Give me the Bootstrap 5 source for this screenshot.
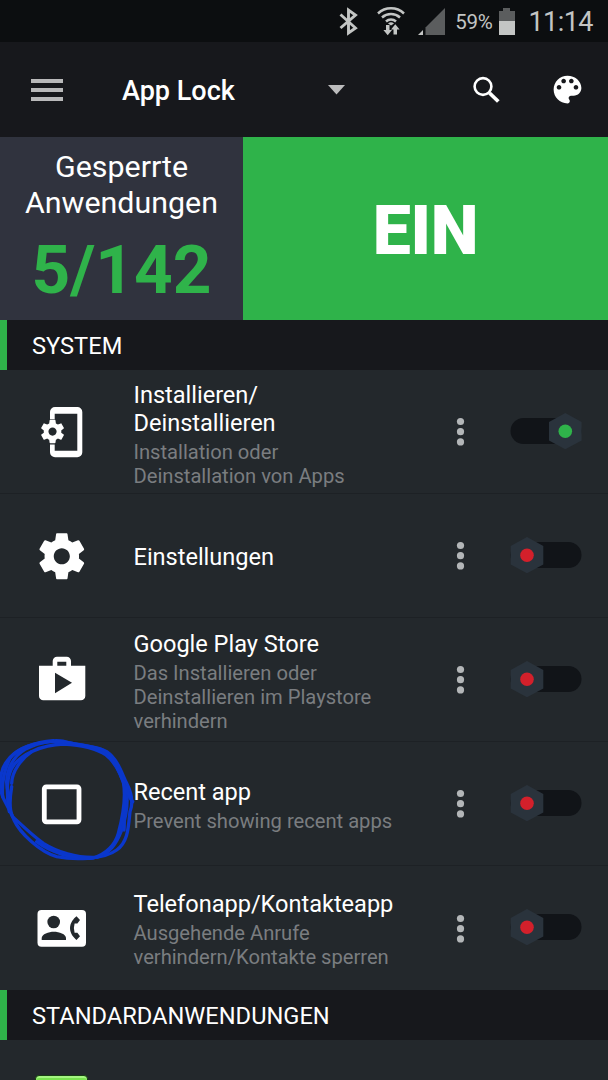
<!DOCTYPE html>
<html lang="de">
<head>
<meta charset="utf-8">
<meta name="viewport" content="width=device-width, initial-scale=1">
<title>App Lock</title>
<link href="https://cdn.jsdelivr.net/npm/bootstrap@5.3.0/dist/css/bootstrap.min.css" rel="stylesheet">
<style>
html,body{height:100%}
body{font-family:Roboto,"Liberation Sans",sans-serif;background:#23282c;color:#fff;overflow:hidden;line-height:1.172}
.screen{width:608px;height:1080px;overflow:hidden}
.screen svg{display:block;flex:none}
.status{height:42px;background:#0c0e10;color:#c3c5c4;padding-right:15px}
.pct{font-size:20.5px;letter-spacing:-.3px;padding-top:3px}
.clock{font-size:27px;letter-spacing:-.55px;padding-top:4px}
.appbar{height:95px;background:#17181c;padding:0 22px 0 31px}
.burger{width:32px;height:22px}
.burger i{height:4px;background:#b9b9ba}
.app-title{font-size:27px;font-weight:500;margin-left:59px;padding-top:4px;width:114px;white-space:nowrap}
.caret{margin-left:92px}
.hero{height:183px}
.count-pane{width:243px;background:#30333e;padding-top:12px}
.count-label{font-size:30.4px;line-height:36px}
.count-num{font-size:67.5px;font-weight:700;line-height:80px;color:#2fb34a;margin-top:9px}
.on-pane{background:#2fb34a;font-size:68px;font-weight:900;padding-top:7px;letter-spacing:-.2px}
.section-head{height:50px;background:#17181c;border-left:7px solid #2fb34a;padding-left:25px;font-size:23.65px;padding-top:3px}
.app-row{height:124px;border-bottom:1px solid #1d2125;padding-left:32px;padding-right:26px}
.app-row .texts{width:290px;margin-left:41.5px;margin-right:.5px;padding-top:3px}
.app-row .texts.two-line{padding-top:5px}
.name{font-size:23.6px;line-height:28px;letter-spacing:-.03px}
.desc{font-size:20.2px;line-height:24px;letter-spacing:-.02px;color:#7a7d80;margin-top:3px}
.dots{margin-left:31px;width:11px}
.toggle{margin-left:44px}
.scribble{left:0;top:-112px;pointer-events:none;z-index:2}
.next-icon{width:53px;height:53px;margin:35px 0 0 35px;background:#79e24f;border:1px solid #173f12;border-top:1px solid #173f12;border-radius:4px;box-shadow:inset 0 2px #a5f582}
</style>
</head>
<body>
<svg width="0" height="0" class="position-absolute">
<defs>
<path id="gear" d="M19.43 12.98c.04-.32.07-.64.07-.98s-.03-.66-.07-.98l2.11-1.65c.19-.15.24-.42.12-.64l-2-3.46c-.12-.22-.39-.3-.61-.22l-2.49 1c-.52-.4-1.08-.73-1.69-.98l-.38-2.65C14.46 2.18 14.25 2 14 2h-4c-.25 0-.46.18-.49.42l-.38 2.65c-.61.25-1.17.59-1.69.98l-2.49-1c-.23-.09-.49 0-.61.22l-2 3.46c-.13.22-.07.49.12.64l2.11 1.65c-.04.32-.07.65-.07.98s.03.66.07.98l-2.11 1.65c-.19.15-.24.42-.12.64l2 3.46c.12.22.39.3.61.22l2.49-1c.52.4 1.08.73 1.69.98l.38 2.65c.03.24.24.42.49.42h4c.25 0 .46-.18.49-.42l.38-2.65c.61-.25 1.17-.59 1.69-.98l2.49 1c.23.09.49 0 .61-.22l2-3.46c.12-.22.07-.49-.12-.64l-2.11-1.65zM12 15.5c-1.93 0-3.5-1.57-3.5-3.5s1.57-3.5 3.5-3.5 3.5 1.57 3.5 3.5-1.57 3.5-3.5 3.5z"/>
<g id="dots" fill="#b3b6b8"><circle cx="5.500" cy="4.500" r="3.600"/><circle cx="5.500" cy="14.700" r="3.600"/><circle cx="5.500" cy="24.900" r="3.600"/></g>
<g id="off"><rect x=".5" y="6" width="71" height="26" rx="13" fill="#111418"/><path d="M17 1 33.300 10v18.500L17 37.300.7 28.500V10z" fill="#2a333c"/><circle cx="17" cy="19.300" r="6.800" fill="#d3202b"/></g>
<g id="on"><rect x=".5" y="6" width="71" height="26" rx="13" fill="#111418"/><path d="M55.300 1 71.600 10v18.500L55.300 37.300 39 28.500V10z" fill="#2a333c"/><circle cx="55.300" cy="19.300" r="6.800" fill="#2fb34a"/></g>
</defs>
</svg>
<div class="screen d-flex flex-column">
  <div class="status d-flex align-items-center justify-content-end flex-shrink-0">
    <svg width="122" height="42" viewBox="334 0 122 42">
      <path d="M341.500 14.500 356.500 28 349.500 33V10l7 5-15 13" fill="none" stroke="#c3c5c4" stroke-width="2.900"/>
      <g fill="none" stroke="#c3c5c4" stroke-width="2.500"><path d="M379 13.500a19 19 0 0 1 26 0"/><path d="M383 17.500a13.500 13.500 0 0 1 18 0"/><path d="M387 21.500a7.500 7.500 0 0 1 10 0"/></g>
      <g fill="#c3c5c4"><path d="M389 23.500q3-2.500 6 0l-3 2zM387 25h3.500v5h2.500l-4.300 5.300-4.300-5.300h2.600zM394.500 34.500v-5H392l4.300-5.300 4.300 5.300H398v5z"/><path d="M419 35l5-5v5z"/></g>
      <path d="M426.500 35V27.500L446 8v27z" fill="#5b5d5e"/>
    </svg>
    <span class="pct">59%</span>
    <svg class="ms-1" width="20" height="42" viewBox="0 0 20 42"><path d="M2 11h4V8h7v3h5v10H2z" fill="#5b5d5e"/><path d="M2 21h16v14H2z" fill="#c3c5c4"/></svg>
    <span class="clock ms-2 ps-1">11:14</span>
  </div>
  <div class="appbar navbar flex-nowrap flex-shrink-0 justify-content-start">
    <div class="burger d-flex flex-column justify-content-between"><i></i><i></i><i></i></div>
    <div class="app-title">App Lock</div>
    <svg class="caret" width="17" height="10" viewBox="0 0 17 10"><path d="M0 0h17L8.500 9.500z" fill="#bcbcbd"/></svg>
    <svg class="ms-auto" width="30" height="30" viewBox="0 0 30 30"><g fill="none" stroke="#fff"><circle cx="12" cy="11.500" r="8.400" stroke-width="2.600"/><path d="M18.500 18 27.300 26.500" stroke-width="3.800"/></g></svg>
    <svg style="margin-left:48px" width="37" height="37" viewBox="0 0 24 24"><path fill="#fff" d="M12 3c-4.970 0-9 4.030-9 9s4.030 9 9 9c.83 0 1.500-.67 1.500-1.500 0-.39-.15-.74-.39-1.010-.23-.26-.38-.61-.38-.99 0-.83.67-1.500 1.500-1.500H16c2.760 0 5-2.240 5-5 0-4.420-4.030-8-9-8zm-5.500 9c-.83 0-1.500-.67-1.500-1.500S5.670 9 6.500 9 8 9.670 8 10.500 7.330 12 6.500 12zm3-4C8.670 8 8 7.330 8 6.500S8.670 5 9.500 5s1.500.67 1.500 1.500S10.330 8 9.500 8zm5 0c-.83 0-1.500-.67-1.500-1.500S13.670 5 14.500 5s1.500.67 1.500 1.500S15.330 8 14.500 8zm3 4c-.83 0-1.500-.67-1.500-1.500S16.670 9 17.500 9s1.500.67 1.500 1.500-.67 1.500-1.500 1.500z"/></svg>
  </div>
  <div class="hero d-flex flex-shrink-0">
    <div class="count-pane text-center flex-shrink-0">
      <div class="count-label">Gesperrte<br>Anwendungen</div>
      <div class="count-num">5/142</div>
    </div>
    <div class="on-pane flex-grow-1 d-flex align-items-center justify-content-center">EIN</div>
  </div>
  <div class="section-head d-flex align-items-center flex-shrink-0">SYSTEM</div>

  <div class="app-row d-flex align-items-center flex-shrink-0">
    <svg width="60" height="60" fill="#fff"><path d="M18 17.300V10a5 5 0 0 1 5-5h22.300a5 5 0 0 1 5 5v40.300a5 5 0 0 1-5 5H23a5 5 0 0 1-5-5v-7.700h4.700v6.100h22.600v-37H22.700v5.600z"/><use href="#gear" transform="translate(6.500 15.500) scale(1.170)"/></svg>
    <div class="texts two-line"><div class="name">Installieren/<br>Deinstallieren</div><div class="desc">Installation oder<br>Deinstallation von Apps</div></div>
    <svg class="dots" width="11" height="29"><use href="#dots"/></svg>
    <svg class="toggle" width="72" height="40"><use href="#on"/></svg>
  </div>
  <div class="app-row d-flex align-items-center flex-shrink-0">
    <svg width="60" height="60" fill="#fff"><use href="#gear" transform="translate(2.200 2.700) scale(2.300)"/></svg>
    <div class="texts"><div class="name">Einstellungen</div></div>
    <svg class="dots" width="11" height="29"><use href="#dots"/></svg>
    <svg class="toggle" width="72" height="40"><use href="#off"/></svg>
  </div>
  <div class="app-row d-flex align-items-center flex-shrink-0">
    <svg width="60" height="60" fill="#fff"><path fill-rule="evenodd" d="M7 15.700h13.700V11a4.300 4.300 0 0 1 4.300-4.300h9.700A4.300 4.300 0 0 1 39 11v4.700h14.300V46a4.300 4.300 0 0 1-4.300 4.300H11.300A4.300 4.300 0 0 1 7 46zM25.300 11.700v4h9v-4zM23 22.700v20.600l17-10.600z"/></svg>
    <div class="texts"><div class="name">Google Play Store</div><div class="desc">Das Installieren oder<br>Deinstallieren im Playstore<br>verhindern</div></div>
    <svg class="dots" width="11" height="29"><use href="#dots"/></svg>
    <svg class="toggle" width="72" height="40"><use href="#off"/></svg>
  </div>
  <div class="app-row d-flex align-items-center flex-shrink-0 position-relative">
    <svg width="60" height="60"><rect x="12.300" y="12.800" width="34.700" height="35" rx="2" fill="none" stroke="#fff" stroke-width="4.800"/></svg>
    <div class="texts"><div class="name">Recent app</div><div class="desc">Prevent showing recent apps</div></div>
    <svg class="dots" width="11" height="29"><use href="#dots"/></svg>
    <svg class="toggle" width="72" height="40"><use href="#off"/></svg>
    <svg class="scribble position-absolute" width="200" height="250" viewBox="0 0 600 750" fill="none" stroke="#0a37cc" stroke-width="10" stroke-linecap="round" stroke-linejoin="round">
      <path d="M25 490C10 440 30 385 75 358C120 335 170 325 205 338C250 348 295 350 320 365C355 390 365 430 380 460C395 490 400 520 390 545C385 590 385 635 350 660C310 690 220 690 170 680C120 665 60 610 42 570C30 540 20 525 10 505C-5 470 0 420 20 395C45 355 110 335 160 332"/>
      <path d="M28 545C20 500 18 450 35 415C60 370 130 345 190 342C240 345 290 355 318 375C350 400 370 450 380 490C385 530 375 570 365 600C350 640 330 670 290 682C230 685 170 665 130 640C90 610 60 580 38 560C25 535 30 500 35 470"/>
      <path d="M8 500C5 460 10 425 30 385C55 350 110 335 180 334C230 342 280 350 302 357C340 375 355 420 370 455C378 500 370 555 355 610C345 645 320 670 280 684C220 690 150 665 110 635M35 460C35 425 65 385 95 365M378 475C370 510 375 560 372 600M398 515C385 500 380 480 382 470"/>
    </svg>
  </div>
  <div class="app-row d-flex align-items-center flex-shrink-0 border-bottom-0">
    <svg width="60" height="60"><rect x="5.500" y="12" width="48.500" height="36.700" rx="4" fill="#fff"/><g fill="#23282c"><circle cx="21.700" cy="24" r="6.300"/><path d="M9.700 42v-2c0-4 7-6.300 12.200-6.300S34 36 34 40v2z"/><path d="M44.500 18.200 48 22l-2.600 3.500h-2.800a15 15 0 0 0 0 9.300h2.800L48 38.300l-3.500 3.800c-3-2.400-6.500-6.600-6.500-12s3.500-9.500 6.500-11.900z"/></g></svg>
    <div class="texts"><div class="name">Telefonapp/Kontakteapp</div><div class="desc">Ausgehende Anrufe<br>verhindern/Kontakte sperren</div></div>
    <svg class="dots" width="11" height="29"><use href="#dots"/></svg>
    <svg class="toggle" width="72" height="40"><use href="#off"/></svg>
  </div>
  <div class="section-head d-flex align-items-center flex-shrink-0">STANDARDANWENDUNGEN</div>
  <div class="next-icon flex-shrink-0"></div>
</div>
<script src="https://cdn.jsdelivr.net/npm/bootstrap@5.3.0/dist/js/bootstrap.bundle.min.js"></script>
</body>
</html>
